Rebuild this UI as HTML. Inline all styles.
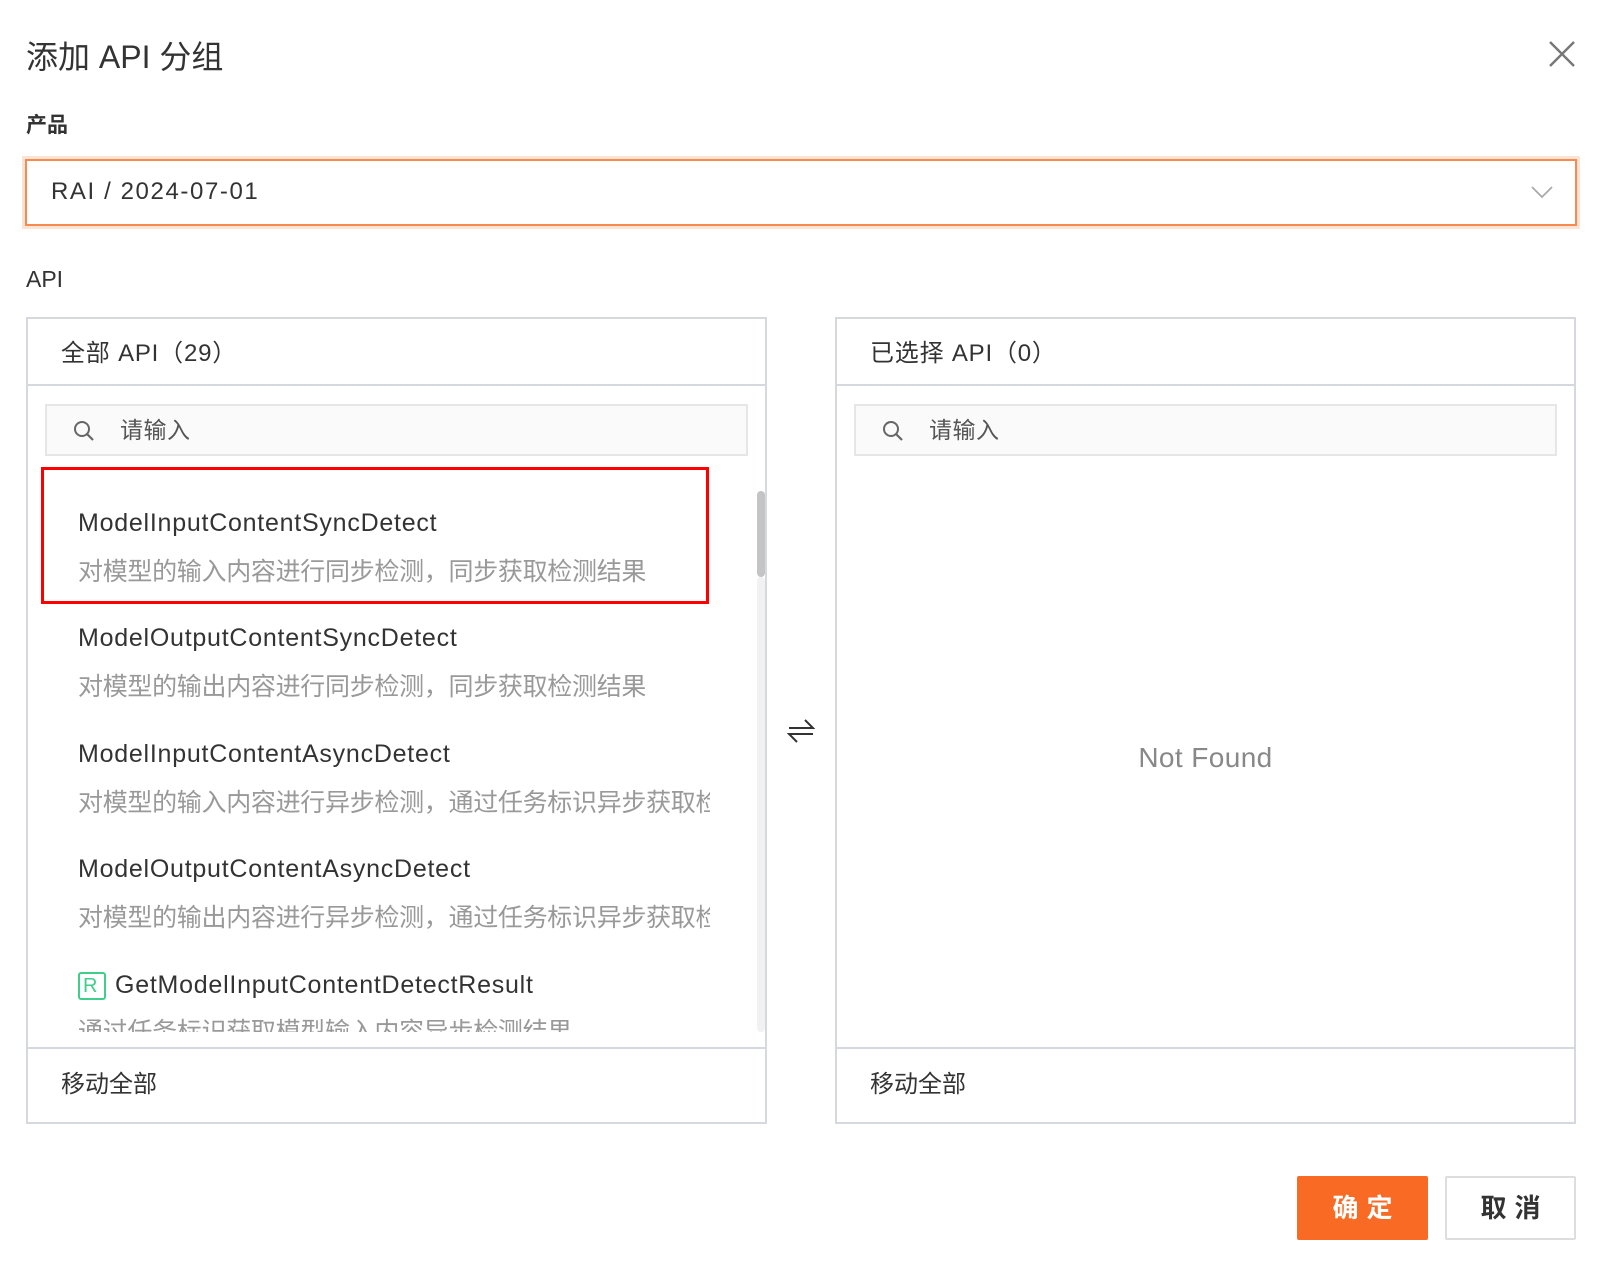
<!DOCTYPE html>
<html><head><meta charset="utf-8"><style>
*{box-sizing:border-box;margin:0;padding:0}
body{width:1610px;height:1276px;background:#fff;font-family:"Liberation Sans","Noto Sans CJK SC",sans-serif;color:#333;position:relative;overflow:hidden}
.a{position:absolute;white-space:nowrap}
.panel{position:absolute;top:317px;width:741px;height:807px;border:2px solid #d5d8dd;}
.ph{position:absolute;left:0;right:0;top:0;height:67px;border-bottom:2px solid #d5d8dd;font-size:24px;letter-spacing:0.8px;padding-left:33px;line-height:70px;color:#333}
.search{position:absolute;left:17px;right:17px;top:85px;height:52px;border:2px solid #e6e6e6;background:#fafafa;font-size:23px;color:#555;line-height:48px;padding-left:73px;letter-spacing:0.5px}
.search svg{position:absolute;left:26px;top:14px}
.pf{position:absolute;left:0;right:0;bottom:0;height:75px;border-top:2px solid #d5d8dd;font-size:24px;padding-left:33px;line-height:72px;color:#333}
.t{font-size:25px;letter-spacing:0.75px;color:#333}
.d{font-size:25px;letter-spacing:-0.3px;color:#999;overflow:hidden;width:632px}
</style></head><body>
<div class="a" style="left:26px;top:32px;font-size:32px;color:#333">添加 API 分组</div>
<svg class="a" style="left:1548px;top:40px" width="28" height="28" viewBox="0 0 28 28"><path d="M2 2L26 26M26 2L2 26" stroke="#777" stroke-width="2.4"/></svg>
<div class="a" style="left:26px;top:109px;font-size:21px;font-weight:bold;color:#333">产品</div>
<div class="a" style="left:25px;top:159px;width:1552px;height:67px;border:2px solid #f98a4f;box-shadow:0 0 0 3px #fde3d4;"></div>
<div class="a" style="left:51px;top:178px;font-size:24px;letter-spacing:1.6px;color:#333">RAI / 2024-07-01</div>
<svg class="a" style="left:1531px;top:185px" width="22" height="14" viewBox="0 0 22 14"><path d="M1 2L11 12L21 2" stroke="#aaa" stroke-width="1.8" fill="none"/></svg>
<div class="a" style="left:26px;top:266px;font-size:23px;color:#333">API</div>

<div class="panel" style="left:26px">
 <div class="ph">全部 API（29）</div>
 <div class="search"><svg width="22" height="22" viewBox="0 0 22 22"><circle cx="9" cy="9" r="7" stroke="#666" stroke-width="2" fill="none"/><path d="M14 14L20 20" stroke="#666" stroke-width="2.2"/></svg>请输入</div>
 <div style="position:absolute;left:0;top:150px;width:725px;height:563px;overflow:hidden">
  <div class="a t" style="left:50px;top:40px">ModelInputContentSyncDetect</div>
  <div class="a d" style="left:50px;top:83px">对模型的输入内容进行同步检测，同步获取检测结果</div>
  <div class="a t" style="left:50px;top:155px">ModelOutputContentSyncDetect</div>
  <div class="a d" style="left:50px;top:198px">对模型的输出内容进行同步检测，同步获取检测结果</div>
  <div class="a t" style="left:50px;top:271px">ModelInputContentAsyncDetect</div>
  <div class="a d" style="left:50px;top:314px">对模型的输入内容进行异步检测，通过任务标识异步获取检测结果</div>
  <div class="a t" style="left:50px;top:386px">ModelOutputContentAsyncDetect</div>
  <div class="a d" style="left:50px;top:429px">对模型的输出内容进行异步检测，通过任务标识异步获取检测结果</div>
  <div class="a" style="left:50px;top:503px;width:28px;height:28px;border:2px solid #3fcf8a;border-radius:3px;color:#3fcf8a;font-size:20px;line-height:24px;padding-left:3px">R</div>
  <div class="a t" style="left:87px;top:502px">GetModelInputContentDetectResult</div>
  <div class="a d" style="left:50px;top:543px">通过任务标识获取模型输入内容异步检测结果</div>
 </div>
 <div style="position:absolute;left:729px;top:172px;width:8px;height:86px;border-radius:4px;background:#c4c4c4"></div>
 <div style="position:absolute;left:729px;top:258px;width:8px;height:455px;border-radius:4px;background:#f1f1f1"></div>
 <div class="pf">移动全部</div>
</div>
<div class="a" style="left:41px;top:467px;width:668px;height:137px;border:3px solid #f00"></div>

<svg class="a" style="left:787px;top:717px" width="28" height="28" viewBox="0 0 28 28"><path d="M2 11H26L18 3M26 17H2L10 25" stroke="#333" stroke-width="2" fill="none"/></svg>

<div class="panel" style="left:835px">
 <div class="ph">已选择 API（0）</div>
 <div class="search"><svg width="22" height="22" viewBox="0 0 22 22"><circle cx="9" cy="9" r="7" stroke="#666" stroke-width="2" fill="none"/><path d="M14 14L20 20" stroke="#666" stroke-width="2.2"/></svg>请输入</div>
 <div class="a" style="left:0;width:737px;text-align:center;top:423px;font-size:28px;letter-spacing:0.4px;color:#888">Not Found</div>
 <div class="pf">移动全部</div>
</div>

<div class="a" style="left:1297px;top:1176px;width:131px;height:64px;background:#f96a24;border-radius:2px;color:#fff;font-size:26px;text-align:center;line-height:64px;letter-spacing:8px;padding-left:8px;font-weight:bold">确定</div>
<div class="a" style="left:1445px;top:1176px;width:131px;height:64px;background:#fff;border:2px solid #ddd;border-radius:2px;color:#333;font-size:26px;text-align:center;line-height:60px;letter-spacing:8px;padding-left:8px;font-weight:bold">取消</div>
</body></html>
